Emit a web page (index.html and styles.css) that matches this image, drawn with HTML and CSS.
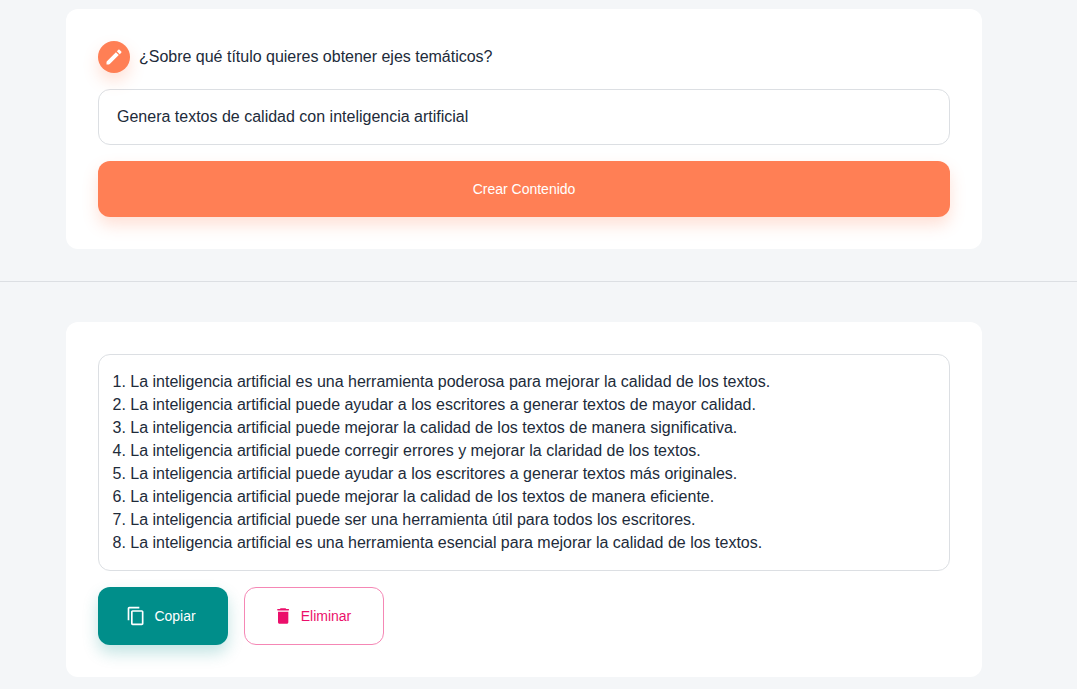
FILE: index.html
```html
<!doctype html>
<html lang="es">
  <head>
    <meta charset="UTF-8" />
    <title>Ejes temáticos</title>
    <link rel="stylesheet" href="styles.css">
  </head>
  <body>
    <section class="section section-form">
      <form class="card">
        <div class="question">
          <span class="badge">
            <svg viewBox="0 0 24 24" width="20" height="20"><path d="M3 18.3c0-.5.2-.9.5-1.2L14.3 6.3l3.4 3.4L6.9 20.5c-.3.3-.7.5-1.2.5H3v-2.7zM20.7 6.8c.4-.4.4-1 0-1.4l-2.1-2.1c-.4-.4-1-.4-1.4 0l-1.8 1.8 3.5 3.5 1.8-1.8z" /></svg>
          </span>
          <label for="title">¿Sobre qué título quieres obtener ejes temáticos?</label>
        </div>
        <input class="field" type="text" id="title" value="Genera textos de calidad con inteligencia artificial" />
        <button class="btn btn-create" type="button">Crear Contenido</button>
      </form>
    </section>

    <section class="section section-result">
      <div class="card">
        <div class="result">
          <div>1. La inteligencia artificial es una herramienta poderosa para mejorar la calidad de los textos.</div>
          <div>2. La inteligencia artificial puede ayudar a los escritores a generar textos de mayor calidad.</div>
          <div>3. La inteligencia artificial puede mejorar la calidad de los textos de manera significativa.</div>
          <div>4. La inteligencia artificial puede corregir errores y mejorar la claridad de los textos.</div>
          <div>5. La inteligencia artificial puede ayudar a los escritores a generar textos más originales.</div>
          <div>6. La inteligencia artificial puede mejorar la calidad de los textos de manera eficiente.</div>
          <div>7. La inteligencia artificial puede ser una herramienta útil para todos los escritores.</div>
          <div>8. La inteligencia artificial es una herramienta esencial para mejorar la calidad de los textos.</div>
        </div>
        <div class="actions">
          <button class="btn btn-copy" type="button">
            <svg viewBox="0 0 24 24" width="20" height="20"><path d="M16 1H4c-1.1 0-2 .9-2 2v14h2V3h12V1zm3 4H8c-1.1 0-2 .9-2 2v14c0 1.1.9 2 2 2h11c1.1 0 2-.9 2-2V7c0-1.1-.9-2-2-2zm0 16H8V7h11v14z" /></svg>
            Copiar
          </button>
          <button class="btn btn-delete" type="button">
            <svg viewBox="0 0 24 24" width="20" height="20"><path d="M6 6.8h12.4v12.8c0 1-.8 1.8-1.8 1.8H7.8c-1 0-1.8-.8-1.8-1.8V6.8zM9.2 2.6h5.8l1 .9h2.5c1.1 0 1.1 1.8 0 1.8H5.8c-1.1 0-1.1-1.8 0-1.8h2.4l1-.9z" /></svg>
            Eliminar
          </button>
        </div>
      </div>
    </section>
  </body>
</html>
```

FILE: styles.css
```css
* {
  box-sizing: border-box;
}

body {
  margin: 0;
  height: 689px;
  overflow: hidden;
  background-color: #f4f6f8;
  color: #212b3a;
  font-family: "Liberation Sans", Arial, sans-serif;
  font-size: 16px;
}

.section {
  padding: 0 95px 0 66px;
}

.section-form {
  padding-top: 9px;
  padding-bottom: 32px;
  border-bottom: 1px solid #dcdfe3;
}

.section-result {
  padding-top: 40px;
}

.card {
  padding: 32px;
  border-radius: 12px;
  background: white;
}

.question {
  display: flex;
  align-items: center;
  gap: 9px;
  margin-bottom: 16px;
  letter-spacing: -0.01px;
}

.badge {
  display: flex;
  align-items: center;
  justify-content: center;
  width: 32px;
  height: 32px;
  border-radius: 50%;
  background-color: #ff7f55;
  color: white;
  box-shadow: 0 8px 16px rgba(255, 127, 85, 0.24);
}

svg {
  fill: currentColor;
}

.field {
  display: block;
  width: 100%;
  height: 56px;
  margin-bottom: 16px;
  padding: 0 18px;
  border: 1px solid #dcdfe3;
  border-radius: 12px;
  background: transparent;
  color: inherit;
  font: inherit;
}

.btn {
  display: flex;
  align-items: center;
  justify-content: center;
  border: 1px solid transparent;
  border-radius: 12px;
  font: 14px "Liberation Sans", Arial, sans-serif;
  cursor: pointer;
}

.btn-create {
  width: 100%;
  height: 56px;
  background-color: #ff7f55;
  color: white;
  box-shadow: 0 8px 16px rgba(255, 127, 85, 0.24);
}

.result {
  height: 217px;
  padding: 15px 13.5px;
  border: 1px solid #dcdfe3;
  border-radius: 12px;
  line-height: 23px;
  letter-spacing: -0.005px;
}

.actions {
  display: flex;
  gap: 16px;
  margin-top: 16px;
}

.actions .btn {
  gap: 8px;
  height: 58px;
}

.actions svg {
  margin-left: -4px;
}

.btn-copy {
  width: 130px;
  background-color: #008e8a;
  color: white;
  box-shadow: 0 8px 16px rgba(0, 142, 138, 0.24);
}

.btn-delete {
  width: 140px;
  border-color: #f587b5;
  background: white;
  color: #eb0f6b;
}
```
